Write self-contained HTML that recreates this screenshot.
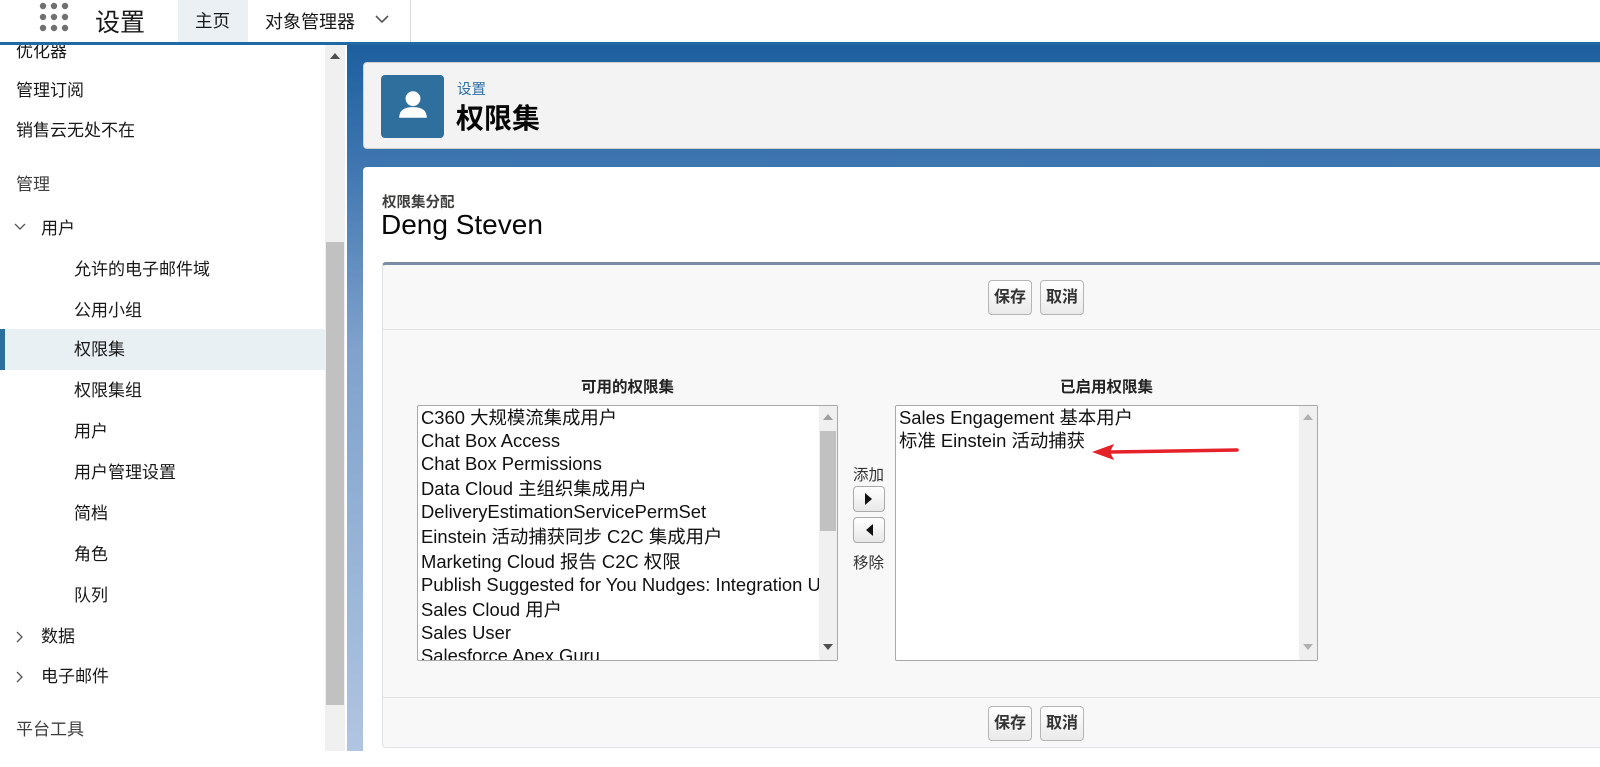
<!DOCTYPE html>
<html><head><meta charset="utf-8"><style>
*{box-sizing:border-box;margin:0;padding:0}
body{width:1600px;height:751px;overflow:hidden;font-family:"Liberation Sans","Noto Sans CJK SC",sans-serif;background:#fff;position:relative;color:#080707}
.abs{position:absolute}
#top{left:0;top:0;width:1600px;height:42px;background:#fff}
#bl{left:0;top:42px;width:1600px;height:3px;background:#1f6aa5}
#side{left:0;top:45px;width:325px;height:706px;background:#fff;overflow:hidden}
.si{position:absolute;font-size:17px;color:#181818;white-space:nowrap;line-height:20px}
#bg{left:347px;top:45px;width:1253px;height:706px;background:linear-gradient(#1d5f9e 0px,#3f76b0 120px,#7fa1cc 300px,#b0c5e0 706px)}
.btn{position:absolute;height:35px;border:1px solid #b5b5b5;border-radius:4px;background:linear-gradient(#fff,#eaeaea);font-size:16px;font-weight:bold;color:#333;line-height:33px;text-align:center;width:44px}
.lst{position:absolute;background:#fff;border:1px solid #a9a9a9;border-radius:2px;overflow:hidden}
.lst div{font-size:18.4px;line-height:23px;white-space:nowrap;padding-left:3px;color:#111}
.sb{position:absolute;right:0;top:0;width:18px;height:100%;background:#f0f0f0}
</style></head><body>
<div id="top" class="abs">
 <svg class="abs" style="left:38px;top:2px" width="32" height="32" viewBox="0 0 32 32" fill="#707070">
  <circle cx="5" cy="4" r="3.2"/><circle cx="16" cy="4" r="3.2"/><circle cx="27" cy="4" r="3.2"/>
  <circle cx="5" cy="15" r="3.2"/><circle cx="16" cy="15" r="3.2"/><circle cx="27" cy="15" r="3.2"/>
  <circle cx="5" cy="26" r="3.2"/><circle cx="16" cy="26" r="3.2"/><circle cx="27" cy="26" r="3.2"/>
 </svg>
 <div class="abs" style="left:95px;top:3px;font-size:25px;color:#181818">设置</div>
 <div class="abs" style="left:178px;top:0;width:70px;height:42px;background:#eaf0f4"></div>
 <div class="abs" style="left:195px;top:8px;font-size:17.5px;color:#181818">主页</div>
 <div class="abs" style="left:265px;top:8px;font-size:18px;color:#181818">对象管理器</div>
 <svg class="abs" style="left:374px;top:13px" width="16" height="12" viewBox="0 0 16 12"><path d="M2 3 L8 9 L14 3" fill="none" stroke="#555" stroke-width="1.6"/></svg>
 <div class="abs" style="left:410px;top:0;width:1px;height:42px;background:#ddd"></div>
</div>
<div id="bl" class="abs"></div>
<div id="side" class="abs">
 <div class="si" style="left:16px;top:-3px">优化器</div>
 <div class="si" style="left:16px;top:36px">管理订阅</div>
 <div class="si" style="left:16px;top:76px">销售云无处不在</div>
 <div class="si" style="left:16px;top:130px;color:#3e3e3c">管理</div>
 <svg class="abs" style="left:13px;top:177px" width="14" height="10"><path d="M2 2 L7 7 L12 2" fill="none" stroke="#555" stroke-width="1.3"/></svg>
 <div class="si" style="left:41px;top:174px">用户</div>
 <div class="si" style="left:74px;top:215px">允许的电子邮件域</div>
 <div class="si" style="left:74px;top:256px">公用小组</div>
 <div class="abs" style="left:0;top:284px;width:325px;height:41px;background:#e9f0f4"></div>
 <div class="abs" style="left:0;top:284px;width:5px;height:41px;background:#2a6f9e"></div>
 <div class="si" style="left:74px;top:295px">权限集</div>
 <div class="si" style="left:74px;top:336px">权限集组</div>
 <div class="si" style="left:74px;top:377px">用户</div>
 <div class="si" style="left:74px;top:418px">用户管理设置</div>
 <div class="si" style="left:74px;top:459px">简档</div>
 <div class="si" style="left:74px;top:500px">角色</div>
 <div class="si" style="left:74px;top:541px">队列</div>
 <svg class="abs" style="left:15px;top:585px" width="10" height="14"><path d="M2 2 L7 7 L2 12" fill="none" stroke="#555" stroke-width="1.3"/></svg>
 <div class="si" style="left:41px;top:582px">数据</div>
 <svg class="abs" style="left:15px;top:625px" width="10" height="14"><path d="M2 2 L7 7 L2 12" fill="none" stroke="#555" stroke-width="1.3"/></svg>
 <div class="si" style="left:41px;top:622px">电子邮件</div>
 <div class="si" style="left:16px;top:675px;color:#3e3e3c">平台工具</div>
</div>
<div class="abs" style="left:325px;top:45px;width:20px;height:706px;background:#f0f0f0"></div>
<div class="abs" style="left:326px;top:242px;width:18px;height:463px;background:#c1c1c1"></div>
<svg class="abs" style="left:329px;top:52px" width="12" height="8"><path d="M1 7 L6 1 L11 7Z" fill="#505050"/></svg>
<div id="bg" class="abs"></div>
<div class="abs" style="left:363px;top:62px;width:1250px;height:87px;background:#f3f3f3;border-radius:4px;border:1px solid #d0d0d0"></div>
<div class="abs" style="left:381px;top:75px;width:63px;height:63px;background:#2e6f9e;border-radius:4px"></div>
<svg class="abs" style="left:396px;top:88px" width="34" height="34" viewBox="0 0 32 32" fill="#fff"><circle cx="16" cy="10" r="7"/><path d="M3 28 Q3 18 16 18 Q29 18 29 28 Z"/></svg>
<div class="abs" style="left:457px;top:78px;font-size:14.5px;color:#2f6fa8">设置</div>
<div class="abs" style="left:456px;top:97px;font-size:28px;font-weight:bold;color:#080707">权限集</div>
<div class="abs" style="left:363px;top:167px;width:1250px;height:600px;background:#fff;border-radius:4px"></div>
<div class="abs" style="left:382px;top:191px;font-size:14.5px;font-weight:bold;color:#3e3e3c">权限集分配</div>
<div class="abs" style="left:381px;top:209px;font-size:28px;color:#080707">Deng Steven</div>
<div class="abs" style="left:382px;top:262px;width:1230px;height:486px;background:#f8f8f8;border:1px solid #e0e3e5;border-top:3px solid #7b8ba3;border-radius:4px"></div>
<div class="abs" style="left:383px;top:329px;width:1220px;height:1px;background:#e0e0e0"></div>
<div class="abs" style="left:383px;top:697px;width:1220px;height:1px;background:#e0e0e0"></div>
<div class="btn" style="left:988px;top:280px">保存</div>
<div class="btn" style="left:1040px;top:280px">取消</div>
<div class="btn" style="left:988px;top:706px">保存</div>
<div class="btn" style="left:1040px;top:706px">取消</div>
<div class="abs" style="left:417px;top:375px;width:421px;text-align:center;font-size:15.5px;font-weight:bold;color:#222">可用的权限集</div>
<div class="abs" style="left:895px;top:375px;width:423px;text-align:center;font-size:15.5px;font-weight:bold;color:#222">已启用权限集</div>
<div class="lst" style="left:417px;top:405px;width:421px;height:256px">
 <div>C360 大规模流集成用户</div><div>Chat Box Access</div><div>Chat Box Permissions</div><div style="margin-top:2px">Data Cloud 主组织集成用户</div><div>DeliveryEstimationServicePermSet</div><div style="margin-top:2px">Einstein 活动捕获同步 C2C 集成用户</div><div style="margin-top:2px">Marketing Cloud 报告 C2C 权限</div><div>Publish Suggested for You Nudges: Integration User</div><div style="margin-top:2px">Sales Cloud 用户</div><div>Sales User</div><div>Salesforce Apex Guru</div>
 <div class="sb" style="padding:0"><div class="abs" style="left:1px;top:25px;width:16px;height:100px;background:#c1c1c1;padding:0"></div>
 <svg class="abs" style="left:4px;top:8px" width="10" height="7"><path d="M0 6 L5 0 L10 6Z" fill="#a0a0a0"/></svg>
 <svg class="abs" style="left:4px;top:238px" width="10" height="7"><path d="M0 0 L5 6 L10 0Z" fill="#505050"/></svg></div>
</div>
<div class="abs" style="left:853px;top:463px;font-size:15.5px;color:#333">添加</div>
<div class="abs" style="left:853px;top:486px;width:32px;height:26px;border:1px solid #aaa;border-radius:4px;background:linear-gradient(#fff,#e8e8e8)"></div>
<svg class="abs" style="left:865px;top:493px" width="8" height="12"><path d="M0 0 L7 6 L0 12Z" fill="#111"/></svg>
<div class="abs" style="left:853px;top:517px;width:32px;height:26px;border:1px solid #aaa;border-radius:4px;background:linear-gradient(#fff,#e8e8e8)"></div>
<svg class="abs" style="left:866px;top:524px" width="8" height="12"><path d="M7 0 L0 6 L7 12Z" fill="#111"/></svg>
<div class="abs" style="left:853px;top:551px;font-size:15.5px;color:#333">移除</div>
<div class="lst" style="left:895px;top:405px;width:423px;height:256px">
 <div>Sales Engagement 基本用户</div><div>标准 Einstein 活动捕获</div>
 <div class="sb"><svg class="abs" style="left:4px;top:8px" width="10" height="7"><path d="M0 6 L5 0 L10 6Z" fill="#b0b0b0"/></svg>
 <svg class="abs" style="left:4px;top:238px" width="10" height="7"><path d="M0 0 L5 6 L10 0Z" fill="#b0b0b0"/></svg></div>
</div>
<svg class="abs" style="left:1090px;top:442px" width="152" height="20"><path d="M20 10 L147 8" stroke="#e5212a" stroke-width="3.5" stroke-linecap="round"/><path d="M2 10 L24 2 L20 10 L24 18Z" fill="#e5212a"/></svg>
</body></html>
